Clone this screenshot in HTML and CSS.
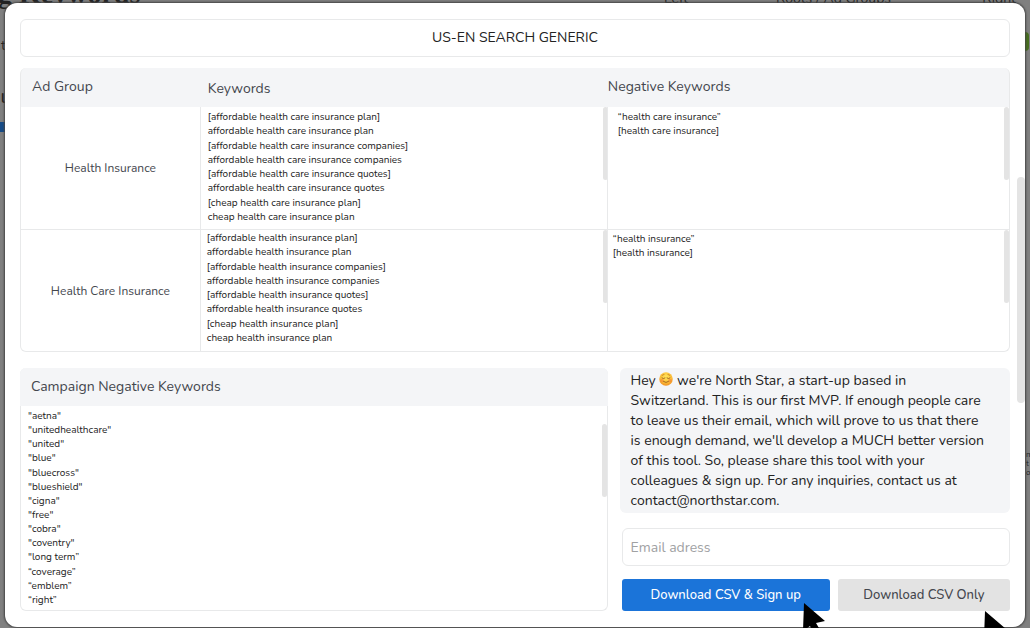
FILE: index.html
```html
<!DOCTYPE html>
<html lang="en">
<head>
<meta charset="utf-8">
<title>US-EN Search Generic</title>
<link rel="stylesheet" href="styles.css">
</head>
<body>
<div class="page-behind" aria-hidden="true">
  <span class="behind-title">g Keywords</span>
  <span class="behind-label behind-left">Left</span>
  <span class="behind-label behind-roots">Roots / Ad Groups</span>
  <span class="behind-label behind-right">Right</span>
  <span class="behind-blue"></span>
  <span class="behind-green"></span>
  <span class="behind-edge edge-t">t</span>
  <span class="behind-edge edge-l">l</span>
  <span class="behind-note">m<br>t<br>of</span>
</div>
<main class="modal">
  <h1 class="campaign">US-EN SEARCH GENERIC</h1>

  <div class="table-card">
    <table class="groups">
      <thead>
        <tr><th class="col-group" scope="col">Ad Group</th><th class="col-keywords" scope="col">Keywords</th><th class="col-negative" scope="col">Negative Keywords</th></tr>
      </thead>
      <tbody>
        <tr>
          <td class="name">Health Insurance</td>
          <td class="cell">
            <ul class="list list-eight">
              <li>[affordable health care insurance plan]</li>
              <li>affordable health care insurance plan</li>
              <li>[affordable health care insurance companies]</li>
              <li>affordable health care insurance companies</li>
              <li>[affordable health care insurance quotes]</li>
              <li>affordable health care insurance quotes</li>
              <li>[cheap health care insurance plan]</li>
              <li>cheap health care insurance plan</li>
            </ul>
            <span class="thumb thumb-keywords"></span>
          </td>
          <td class="cell cell-negative cell-indent">
            <ul class="list">
              <li>“health care insurance”</li>
              <li>[health care insurance]</li>
            </ul>
            <span class="thumb"></span>
          </td>
        </tr>
        <tr>
          <td class="name">Health Care Insurance</td>
          <td class="cell">
            <ul class="list list-eight">
              <li>[affordable health insurance plan]</li>
              <li>affordable health insurance plan</li>
              <li>[affordable health insurance companies]</li>
              <li>affordable health insurance companies</li>
              <li>[affordable health insurance quotes]</li>
              <li>affordable health insurance quotes</li>
              <li>[cheap health insurance plan]</li>
              <li>cheap health insurance plan</li>
            </ul>
            <span class="thumb thumb-keywords"></span>
          </td>
          <td class="cell cell-negative">
            <ul class="list">
              <li>“health insurance”</li>
              <li>[health insurance]</li>
            </ul>
            <span class="thumb"></span>
          </td>
        </tr>
      </tbody>
    </table>
  </div>

  <div class="lower">
    <section class="panel">
      <h2 class="panel-title">Campaign Negative Keywords</h2>
      <ul class="list panel-list">
        <li>"aetna"</li>
        <li>"unitedhealthcare"</li>
        <li>"united"</li>
        <li>"blue"</li>
        <li>"bluecross"</li>
        <li>"blueshield"</li>
        <li>"cigna"</li>
        <li>"free"</li>
        <li>"cobra"</li>
        <li>"coventry"</li>
        <li>"long term”</li>
        <li>“coverage”</li>
        <li>“emblem”</li>
        <li>“right”</li>
      </ul>
      <span class="thumb thumb-panel"></span>
    </section>

    <form class="signup">
      <p class="info">Hey <svg class="emoji" viewBox="0 0 28 28" role="img" aria-label="smiling face">
        <defs><radialGradient id="face" cx="50%" cy="35%" r="65%"><stop offset="0" stop-color="#ffe65c"/><stop offset=".6" stop-color="#fdc23a"/><stop offset="1" stop-color="#f09022"/></radialGradient></defs>
        <circle cx="14" cy="14" r="13.5" fill="url(#face)"/>
        <circle cx="6" cy="17" r="3.5" fill="#f4763a" opacity=".5"/><circle cx="22" cy="17" r="3.5" fill="#f4763a" opacity=".5"/>
        <path d="M6 12q3 2.500 6 0M16 12q3 2.500 6 0M9 19q5 4 10 0" fill="none" stroke="#8a4f1a" stroke-width="1.600" stroke-linecap="round"/>
        <path d="M6 7q2-2 4-2M18 5q2 0 4 2" fill="none" stroke="#b8701e" stroke-width="1.400" stroke-linecap="round"/>
      </svg> we're North Star, a start-up based in<br>Switzerland. This is our first MVP. If enough people care<br>to leave us their email, which will prove to us that there<br>is enough demand, we'll develop a MUCH better version<br>of this tool. So, please share this tool with your<br>colleagues &amp; sign up. For any inquiries, contact us at<br>contact@northstar.com.</p>
      <input class="email" type="email" placeholder="Email adress" aria-label="Email adress">
      <div class="actions">
        <button class="btn btn-primary" type="button">Download CSV &amp; Sign up</button>
        <button class="btn btn-plain" type="button">Download CSV Only</button>
      </div>
    </form>
  </div>
  <span class="modal-thumb"></span>
</main>
<svg class="pointer pointer-one" viewBox="0 0 22 34" aria-hidden="true"><path d="M1 0L22 18L13 20L20 32L12 34L7 23L0 28Z"/></svg>
<svg class="pointer pointer-two" viewBox="0 0 22 34" aria-hidden="true"><path d="M1 0L22 18L13 20L20 32L12 34L7 23L0 28Z"/></svg>
</body>
</html>
```
FILE: styles.css
```css
* { box-sizing: border-box; }

body {
  position: relative;
  min-height: 100vh;
  margin: 0;
  padding: 3px 5px 2px;
  overflow: hidden;
  background: #808080;
  color: #222;
  font-family: Nunito, Lato, "Open Sans", sans-serif;
  font-size: 14px;
}

.page-behind { position: absolute; inset: 0; overflow: hidden; color: #222; }
.page-behind span { position: absolute; white-space: nowrap; }
.behind-title { left: -2px; top: -20px; font: bold 28px/28px "Liberation Serif", serif; }
.behind-label { top: -8px; font-size: 14px; line-height: 14px; }
.behind-left { left: 664px; }
.behind-roots { left: 776px; }
.behind-right { right: 14px; }
.behind-blue { left: 0; top: 122px; width: 5px; height: 10px; background: #164b87; }
.behind-green { right: 1px; top: 32px; width: 4px; height: 19px; border-radius: 0 4px 4px 0; background: #476f1e; }
.behind-edge { left: 1px; font-size: 14px; line-height: 14px; }
.edge-t { top: 39px; }
.edge-l { top: 92px; font-weight: bold; }
.behind-note { left: 1026px; top: 450px; font-size: 8px; line-height: 9px; }

.modal {
  position: relative;
  display: flex;
  flex-direction: column;
  min-height: calc(100vh - 5px);
  padding: 16px 15px;
  border-radius: 12px;
  background: #fff;
  box-shadow: 0 0 2px 1px #444;
}

.campaign {
  margin: 0 0 11px;
  padding: 9px;
  border: 1px solid #e8e9ea;
  border-radius: 6px;
  font-size: 14px;
  font-weight: 400;
  line-height: 18px;
  text-align: center;
}

.table-card {
  margin-bottom: 16px;
  border: 1px solid #e8e9ea;
  border-top: 0;
  border-radius: 6px;
  background: linear-gradient(#f4f5f7 39px, #fff 39px);
}

.groups { width: 100%; border-collapse: separate; border-spacing: 0; table-layout: fixed; }
.groups th {
  height: 39px;
  padding: 0 0 2px 7px;
  color: #43464d;
  font-size: 14px;
  font-weight: 400;
  line-height: 20px;
  text-align: left;
}
.groups .col-group { width: 18.1%; padding-left: 11px; }
.groups .col-keywords { width: 41.2%; padding: 2px 0 0 8px; }
.groups .col-negative { padding-left: 1px; }
.groups td { height: 122px; padding: 0; }
.groups tbody td { border-bottom: 1px solid #e8e9ea; }
.groups tbody tr:first-child td { height: 123px; }
.groups tbody tr:last-child td { border-bottom: 0; height: 121px; }
.name { color: #43464d; font-size: 12px; text-align: center; }
.groups .cell { position: relative; padding: 3px 7px; border-left: 1px solid #e8e9ea; vertical-align: top; }
.groups tbody tr + tr .cell { padding: 1px 6px; }
.groups .cell-indent { padding-left: 10px; }
.groups tbody tr + tr .cell-negative { padding: 2px 5px; }

.list {
  display: flex;
  flex-direction: column;
  justify-content: space-between;
  margin: 0;
  padding: 0;
  list-style: none;
  font-size: 10px;
  line-height: 14px;
}
.list-eight { height: 114px; }

.thumb { position: absolute; top: 0; right: 0; width: 5px; height: 73px; border-radius: 3px; background: #e4e4e4; }
.thumb-keywords { right: -1px; }
.thumb-panel { top: 56px; }

.lower { display: grid; grid-template-columns: 587fr 390fr; gap: 12px; }

.panel { position: relative; display: flex; flex-direction: column; border: 1px solid #e8e9ea; border-top: 0; border-radius: 6px; }
.panel-title {
  margin: 0 -1px;
  padding: 9px 11px;
  border-radius: 6px 6px 0 0;
  background: #f4f5f7;
  color: #43464d;
  font-size: 14px;
  font-weight: 400;
  line-height: 20px;
}
.panel-list { flex: 1; padding: 3px 7px; }

.signup { display: flex; flex-direction: column; }
.info { margin: 0 0 15px; padding: 3px 0 2px 11px; border-radius: 6px; background: #f4f5f7; font-size: 14px; line-height: 20px; white-space: nowrap; }
.emoji { width: 14px; height: 14px; vertical-align: -1px; }
.email {
  height: 38px;
  margin: 0 0 13px 2px;
  padding: 0 8px;
  border: 1px solid #e8e9ea;
  border-radius: 6px;
  background: #fff;
  font: inherit;
}
.email::placeholder { color: #a0a1a3; opacity: 1; }

.actions { display: grid; grid-template-columns: 208fr 172fr; gap: 8px; margin-left: 2px; }
.btn { height: 32px; padding: 0; border: 0; border-radius: 3px; font-family: inherit; font-size: 13px; font-weight: 500; }
.btn-primary { background: #1b74d9; color: #fff; }
.btn-plain { background: #e3e3e3; color: #43464d; }

.modal-thumb { position: absolute; top: 174px; right: 0; width: 8px; height: 226px; border-radius: 4px; background: #e4e4e4; }

.pointer { position: absolute; width: 22px; height: 34px; }
.pointer-one { left: 803px; top: 603px; }
.pointer-two { left: 984px; top: 611px; }
```
